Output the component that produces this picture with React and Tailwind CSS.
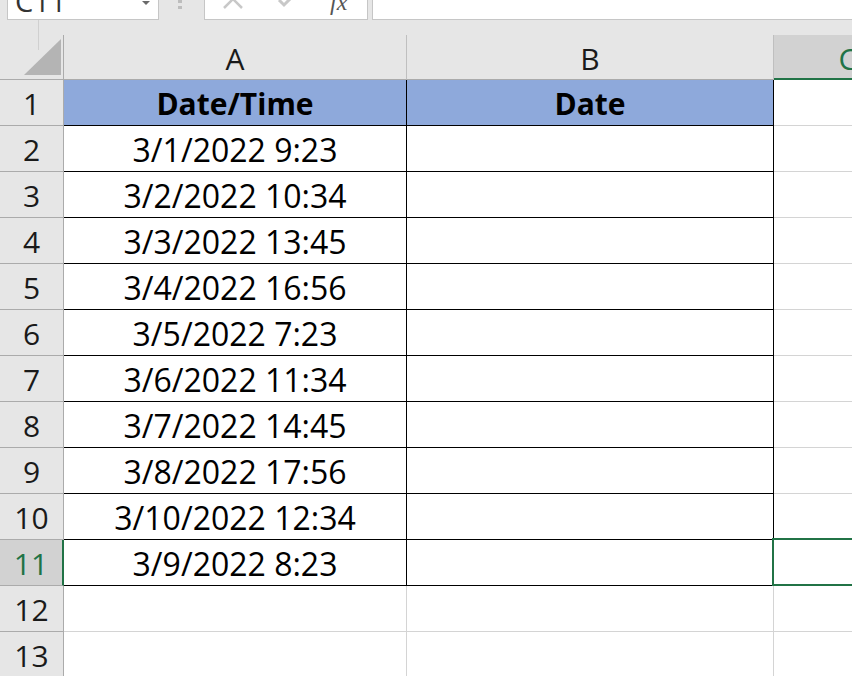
import React from "react";

const rows = [
  ["Date/Time", "Date"],
  ["3/1/2022 9:23", ""],
  ["3/2/2022 10:34", ""],
  ["3/3/2022 13:45", ""],
  ["3/4/2022 16:56", ""],
  ["3/5/2022 7:23", ""],
  ["3/6/2022 11:34", ""],
  ["3/7/2022 14:45", ""],
  ["3/8/2022 17:56", ""],
  ["3/10/2022 12:34", ""],
  ["3/9/2022 8:23", ""],
  ["", ""],
  ["", ""],
];

const font = { fontFamily: '"Open Sans", "Noto Sans", sans-serif' };

function Row({ n, a, b }) {
  const isHead = n === 1;
  const inTable = n <= 11;
  const sel = n === 11;
  const cellBorder = inTable ? "border-black" : "border-[#d4d4d4]";
  const textCls = isHead ? "bg-[#8ea9db] font-bold text-[30px]" : "bg-white text-[32px]";
  return (
    <div className="flex h-[46px] shrink-0">
      <div
        className={`w-[64px] shrink-0 flex items-center justify-center pt-[2px] border-b border-[#ababab] text-[30px] ${
          sel
            ? "bg-[#d2d2d2] text-[#217346] border-r-2 border-r-[#217346]"
            : "bg-[#e6e6e6] text-[#1a1a1a] border-r border-r-[#ababab]"
        }`}
      >
        {n}
      </div>
      <div
        className={`w-[343px] shrink-0 flex items-center justify-center pt-[2px] border-r border-b ${cellBorder} ${textCls} text-black whitespace-nowrap`}
      >
        {a}
      </div>
      <div
        className={`w-[367px] shrink-0 flex items-center justify-center pt-[2px] border-r border-b ${cellBorder} ${textCls} text-black whitespace-nowrap`}
      >
        {b}
      </div>
      <div className="relative w-[148px] shrink-0 border-r border-b border-[#d4d4d4] bg-white">
        {sel && (
          <div className="absolute top-[-2px] bottom-[-1px] left-[-2px] right-[-40px] border-2 border-[#217346]" />
        )}
      </div>
    </div>
  );
}

export default function App() {
  return (
    <div
      className="relative w-[852px] h-[676px] overflow-hidden bg-white flex flex-col"
      style={font}
    >
      {/* Formula bar area */}
      <div className="h-[35px] shrink-0 bg-[#e6e6e6] flex items-start">
        <div className="ml-[7px] w-[152px] h-[20px] bg-white border border-t-0 border-[#c6c6c6] relative overflow-hidden">
          <span className="absolute left-[7px] top-[-14px] text-[29px] leading-none text-[#333]">
            C11
          </span>
          <svg className="absolute left-[134px] top-[1px]" width="8" height="5" viewBox="0 0 8 5">
            <path d="M0 0 L8 0 L4 4 Z" fill="#6a6a6a" />
          </svg>
        </div>
        <div className="ml-[19px] w-[4px] flex flex-col gap-[3px]">
          <div className="w-[4px] h-[3px] bg-[#bdbdbd]" />
          <div className="w-[4px] h-[3px] bg-[#bdbdbd]" />
        </div>
        <div className="ml-[22px] w-[164px] h-[20px] bg-white border border-t-0 border-[#c6c6c6] relative overflow-hidden">
          <svg className="absolute left-[17px] top-[-6px]" width="22" height="16" viewBox="0 0 22 16">
            <path d="M2 14 L11 5 L20 14" stroke="#c8c8c8" strokeWidth="2.5" fill="none" />
          </svg>
          <svg className="absolute left-[72px] top-[-6px]" width="20" height="16" viewBox="0 0 20 16">
            <path d="M2 6 L7 11 L18 0" stroke="#c8c8c8" strokeWidth="3" fill="none" />
          </svg>
          <span
            className="absolute left-[125px] top-[-10px] text-[24px] italic leading-none text-[#555]"
            style={{ fontFamily: '"Liberation Serif", serif' }}
          >
            fx
          </span>
        </div>
        <div className="ml-[4px] flex-1 h-[20px] bg-white border border-t-0 border-r-0 border-[#c6c6c6]" />
      </div>

      {/* Column headers */}
      <div className="flex h-[45px] shrink-0">
        <div className="relative w-[64px] shrink-0 bg-[#e6e6e6] border-r border-b border-[#ababab]">
          <svg className="absolute left-[24px] top-[4px]" width="38" height="37" viewBox="0 0 38 37">
            <path d="M37 0 L37 36 L0 36 Z" fill="#b4b4b4" />
          </svg>
        </div>
        <div className="w-[343px] shrink-0 bg-[#e6e6e6] border-r border-[#bfbfbf] border-b border-b-[#ababab] flex items-center justify-center pt-[2px] text-[30px] text-[#1a1a1a]">
          A
        </div>
        <div className="w-[367px] shrink-0 bg-[#e6e6e6] border-r border-[#bfbfbf] border-b border-b-[#ababab] flex items-center justify-center pt-[2px] text-[30px] text-[#1a1a1a]">
          B
        </div>
        <div className="w-[148px] shrink-0 bg-[#d2d2d2] border-b-2 border-[#217346] flex items-center justify-center pt-[3px] text-[30px] text-[#217346]">
          C
        </div>
      </div>

      {rows.map((r, i) => (
        <Row key={i} n={i + 1} a={r[0]} b={r[1]} />
      ))}

      {/* splitter line */}
      <div className="absolute left-[38px] top-[20px] w-[1px] h-[30px] bg-[#d0d0d0]" />
    </div>
  );
}
